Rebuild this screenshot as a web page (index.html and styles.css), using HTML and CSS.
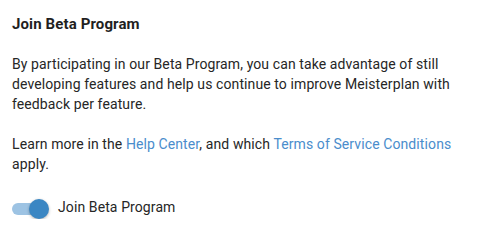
FILE: index.html
```html
<!DOCTYPE html>
<html>
<head>
<meta charset="utf-8">
<link rel="stylesheet" href="styles.css">
</head>
<body>
<div class="panel">
  <h2 class="title">Join Beta Program</h2>
  <p class="text">By participating in our Beta Program, you can take advantage of still developing features and help us continue to improve Meisterplan with feedback per feature.</p>
  <p class="text">Learn more in the <a class="link" href="#">Help Center</a>, and which <a class="link" href="#">Terms of Service Conditions</a> apply.</p>
  <label class="switch-row">
    <span class="switch">
      <span class="track"></span>
      <span class="thumb"></span>
    </span>
    <span class="switch-label">Join Beta Program</span>
  </label>
</div>
</body>
</html>
```

FILE: styles.css
```css
html, body {
  margin: 0;
  padding: 0;
  background: #ffffff;
}
body {
  font-family: Roboto, "Liberation Sans", sans-serif;
  color: #222222;
}
.panel {
  padding: 14px 12px 0 12px;
  width: 460px;
}
.title {
  margin: 0;
  font-size: 15px;
  font-weight: 700;
  line-height: 20px;
  letter-spacing: 0.12px;
  color: #1f1f1f;
}
.text {
  margin: 19.5px 0 0 0;
  font-size: 14px;
  line-height: 20px;
  letter-spacing: 0.1px;
  color: #262626;
}
.text + .text {
  margin-top: 20px;
}
.link {
  color: #4a8dcc;
  text-decoration: none;
}
.switch-row {
  display: flex;
  align-items: flex-start;
  gap: 8px;
  margin-top: 25.5px;
  height: 20px;
}
.switch {
  position: relative;
  width: 38px;
  height: 20px;
  flex: none;
}
.track {
  position: absolute;
  left: 0;
  top: 4px;
  width: 34px;
  height: 12px;
  border-radius: 6px;
  background: #9dc3e3;
}
.thumb {
  position: absolute;
  left: 17px;
  top: 0;
  width: 20px;
  height: 20px;
  border-radius: 50%;
  background: #3a86c3;
  box-shadow: 0 1px 3px rgba(0, 0, 0, 0.3);
}
.switch-label {
  font-size: 14px;
  line-height: 17px;
  letter-spacing: 0.1px;
  color: #262626;
}
```
